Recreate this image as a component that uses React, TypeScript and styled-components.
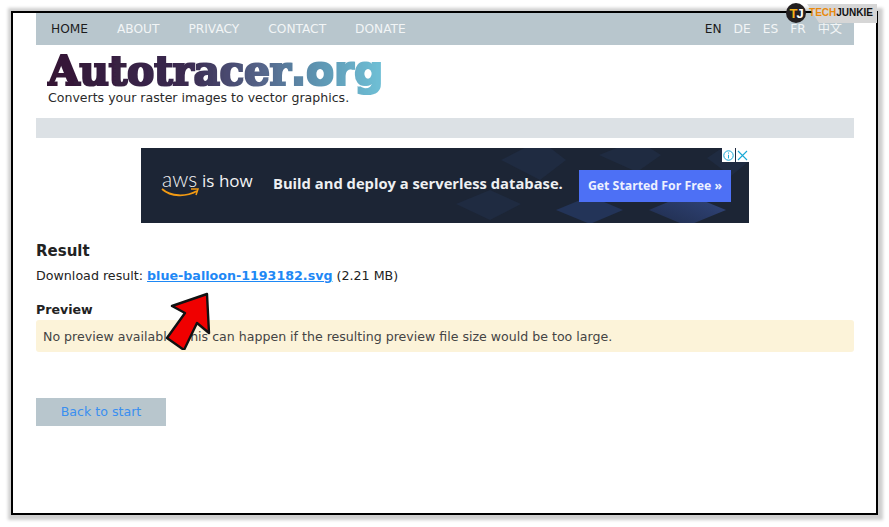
import React from "react"
import styled, { createGlobalStyle } from "styled-components"

const GlobalStyle = createGlobalStyle`
  html {
    overflow: hidden;
  }
  html, body {
    margin: 0;
    padding: 0;
    background: #fff;
  }
  body {
    height: 527px;
  }
  * { box-sizing: border-box; }
`

const Frame = styled.div`
  position: relative;
  width: 867px;
  height: 504px;
  margin: 11px 0 0 11px;
  padding: 0 22px 0 23px;
  border: 2px solid #000;
  background: #fff;
  box-shadow: 1px 1px 3px 4px #cfcfcf;
  font-family: "DejaVu Sans", Verdana, sans-serif;
  font-size: 12.6px;
  color: #222;
`

const Nav = styled.nav`
  display: flex;
  justify-content: space-between;
  align-items: center;
  height: 32px;
  padding: 0 12px 0 15px;
  background: #b8c6cd;
  font-size: 12.2px;
`

const NavGroup = styled.div<{ $gap: number }>`
  display: flex;
  align-items: center;
  gap: ${(p) => p.$gap}px;
  line-height: 16px;
`

const NavLink = styled.a<{ $active?: boolean; $cjk?: boolean }>`
  color: ${(p) => (p.$active ? "#1c1c1c" : "#f2f5f6")};
  text-decoration: none;
  ${(p) => (p.$cjk ? `font-family: "Noto Sans CJK SC", sans-serif; margin-top: -2px;` : "")}
`

const Brand = styled.div`
  height: 73px;
  padding: 5px 0 0 12px;
`

const Logo = styled.div`
  width: fit-content;
  height: 50px;
  margin-bottom: -10px;
  padding-bottom: 8px;
  font-family: "DejaVu Serif", serif;
  font-size: 41px;
  font-weight: 700;
  line-height: 42px;
  letter-spacing: -0.5px;
  background: linear-gradient(90deg, #331534 0%, #3a2a50 42%, #55658a 64%, #5d93b0 80%, #6fc0d6 100%);
  -webkit-background-clip: text;
  background-clip: text;
  color: transparent;
  filter: url(#logo-heavy);
`

const LogoTld = styled.span`
  font-family: "DejaVu Sans", sans-serif;
  letter-spacing: -0.2px;
`

const FilterDefs = styled.svg`
  position: absolute;
  width: 0;
  height: 0;
`

const Tagline = styled.div`
  font-size: 12.55px;
  line-height: 15px;
  color: #2a2a2a;
`

const Strip = styled.div`
  height: 20px;
  background: #dce1e5;
`

const Ad = styled.div`
  position: relative;
  display: flex;
  align-items: center;
  width: 608px;
  height: 75px;
  margin: 10px auto 0;
  padding: 0 18px 0 21px;
  overflow: hidden;
  background: #1c2535;
  color: #fff;
  font-family: "Open Sans", sans-serif;
`

const AdBackdrop = styled.svg`
  position: absolute;
  inset: 0;
`

const AwsMark = styled.div`
  position: relative;
  width: 92px;
  margin-top: -12px;
  font-size: 17px;
  line-height: 20px;
  font-weight: 400;
  white-space: nowrap;
  color: #f2f3f4;
`

const AwsWord = styled.span`
  font-family: "Lato", sans-serif;
  font-size: 21px;
  font-weight: 300;
  margin-right: 5px;
`

const AwsSmile = styled.svg`
  position: absolute;
  left: -1px;
  top: 18px;
`

const AdHeadline = styled.div`
  position: relative;
  margin: -6px 0 0 19px;
  font-size: 14.75px;
  font-weight: 700;
  white-space: nowrap;
  color: #eef0f2;
`

const AdButton = styled.div`
  position: relative;
  display: flex;
  align-items: center;
  justify-content: center;
  width: 152px;
  height: 32px;
  margin-left: auto;
  background: #4d70f5;
  font-size: 12.3px;
  font-weight: 700;
  color: #edf1ff;
`

const AdChoices = styled.div`
  position: absolute;
  top: 0;
  right: 0;
  display: flex;
  gap: 1px;
`

const AdChoice = styled.div`
  display: flex;
  align-items: center;
  justify-content: center;
  width: 13px;
  height: 14px;
  background: #fff;
`

const Heading = styled.h2`
  margin: 19px 0 0;
  font-size: 15px;
  line-height: 19px;
  font-weight: 700;
  color: #222;
`

const DownloadLine = styled.p`
  margin: 6px 0 0;
  font-size: 12.66px;
  line-height: 18px;
`

const FileLink = styled.a`
  color: #1e88f5;
  font-weight: 700;
  text-decoration: underline;
`

const Subheading = styled.h3`
  margin: 17px 0 0;
  font-size: 12.6px;
  line-height: 16px;
  font-weight: 700;
  color: #222;
`

const Notice = styled.div`
  height: 32px;
  margin-top: 2px;
  padding: 0 7px;
  border-radius: 3px;
  background: #fcf3d9;
  font-size: 12.58px;
  line-height: 34px;
  color: #444;
`

const BackButton = styled.a`
  display: block;
  width: 130px;
  height: 28px;
  margin-top: 46px;
  background: #b8c6cd;
  color: #3a8ff0;
  font-size: 12.6px;
  line-height: 28px;
  text-align: center;
  text-decoration: none;
`

const ArrowMark = styled.svg`
  position: absolute;
  left: 150px;
  top: 275px;
`

const Badge = styled.div`
  position: absolute;
  right: -1px;
  top: -9px;
  display: flex;
  align-items: center;
  height: 19px;
  padding: 0 4px 2px 2px;
  font-family: "Liberation Sans", sans-serif;
  font-size: 10px;
  font-weight: 700;

  &::before {
    content: "";
    position: absolute;
    inset: 0;
    background: #d6d6d6;
    clip-path: polygon(0 0, 100% 0, 100% 100%, 12px 100%);
  }
`

const BadgeRound = styled.div`
  position: absolute;
  left: -21px;
  top: -1px;
  display: flex;
  align-items: center;
  justify-content: center;
  width: 20px;
  height: 20px;
  border-radius: 50%;
  background: #231f20;
  font-size: 13px;
  letter-spacing: -1px;
`

const BadgeWord = styled.span<{ $orange?: boolean }>`
  position: relative;
  color: ${(p) => (p.$orange ? "#e8890c" : "#111")};
`

const BadgeT = styled.span`
  color: #f5b21a;
`

const BadgeJ = styled.span`
  color: #fff;
`

const menu = ["ABOUT", "PRIVACY", "CONTACT", "DONATE"]
const langs = ["DE", "ES", "FR"]

export default function App() {
  return (
    <>
      <GlobalStyle />
      <FilterDefs aria-hidden="true">
        <filter id="logo-heavy">
          <feMorphology operator="dilate" radius="0.55" />
        </filter>
      </FilterDefs>
      <Frame>
        <Nav>
          <NavGroup $gap={29}>
            <NavLink $active>HOME</NavLink>
            {menu.map((m) => (
              <NavLink key={m}>{m}</NavLink>
            ))}
          </NavGroup>
          <NavGroup $gap={12}>
            <NavLink $active>EN</NavLink>
            {langs.map((l) => (
              <NavLink key={l}>{l}</NavLink>
            ))}
            <NavLink $cjk>中文</NavLink>
          </NavGroup>
        </Nav>

        <Brand>
          <Logo>
            Autotracer<LogoTld>.org</LogoTld>
          </Logo>
          <Tagline>Converts your raster images to vector graphics.</Tagline>
        </Brand>
        <Strip />

        <Ad>
          <AdBackdrop width="608" height="75" viewBox="0 0 608 75">
            <defs>
              <linearGradient id="ad-glow" x1="0" y1="1" x2="1" y2="0">
                <stop offset="0" stopColor="#1f2c4a" />
                <stop offset="1" stopColor="#32477f" />
              </linearGradient>
            </defs>
            <g fill="#1f2b41">
              <polygon points="399,-8 425,12 399,32 360,12" />
              <polygon points="496,-8 520,7 496,24 458,7" />
              <polygon points="349,42 380,56 349,72 315,56" />
              <polygon points="590,-6 612,10 590,28 566,10" />
            </g>
            <polygon points="449,48 482,62 449,76 415,62" fill="#233458" />
            <polygon points="546,46 585,62 546,78 508,62" fill="url(#ad-glow)" />
          </AdBackdrop>
          <AwsMark>
            <AwsWord>aws</AwsWord>is how
            <AwsSmile width="40" height="12" viewBox="0 0 40 12">
              <path d="M1 2 C10 10 25 10 36 4" fill="none" stroke="#f29a13" strokeWidth="1.8" />
              <path d="M30 2 L37 2 L35 8" fill="none" stroke="#f29a13" strokeWidth="1.5" />
            </AwsSmile>
          </AwsMark>
          <AdHeadline>Build and deploy a serverless database.</AdHeadline>
          <AdButton>Get Started For Free »</AdButton>
          <AdChoices>
            <AdChoice>
              <svg width="11" height="11" viewBox="0 0 11 11">
                <circle cx="5.5" cy="5.5" r="4.7" fill="none" stroke="#19a9d6" />
                <path d="M5.5 2.5 V3.6 M5.5 4.8 V8.4" stroke="#19a9d6" />
              </svg>
            </AdChoice>
            <AdChoice>
              <svg width="11" height="11" viewBox="0 0 11 11">
                <path d="M1 1 L10 10 M10 1 L1 10" stroke="#19a9d6" strokeWidth="1.1" />
              </svg>
            </AdChoice>
          </AdChoices>
        </Ad>

        <Heading>Result</Heading>
        <DownloadLine>
          Download result: <FileLink>blue-balloon-1193182.svg</FileLink> (2.21 MB)
        </DownloadLine>
        <Subheading>Preview</Subheading>
        <Notice>No preview available. This can happen if the resulting preview file size would be too large.</Notice>
        <BackButton>Back to start</BackButton>

        <ArrowMark width="50" height="62" viewBox="0 0 50 62">
          <polygon
            points="44,6 9,18 22,25 4,50 21,62 34,35 46,45"
            fill="#f00000"
            stroke="#111"
            strokeWidth="2.4"
            strokeLinejoin="round"
          />
        </ArrowMark>

        <Badge>
          <BadgeRound>
            <BadgeT>T</BadgeT>
            <BadgeJ>J</BadgeJ>
          </BadgeRound>
          <BadgeWord $orange>TECH</BadgeWord>
          <BadgeWord>JUNKIE</BadgeWord>
        </Badge>
      </Frame>
    </>
  )
}
